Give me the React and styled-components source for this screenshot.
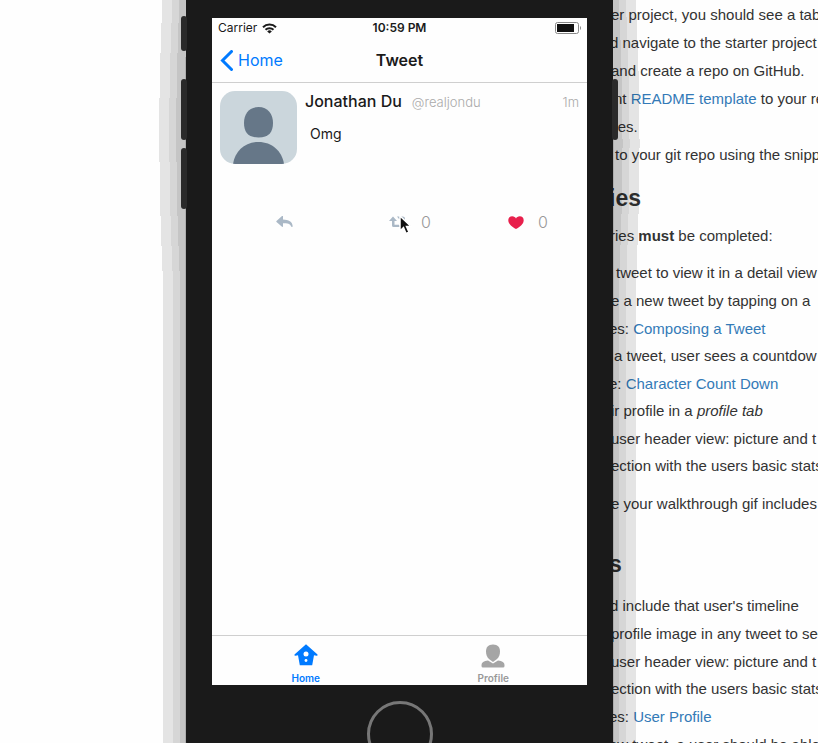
import React from "react";
import styled, { createGlobalStyle } from "styled-components";

const ui = `Inter, "Liberation Sans", sans-serif`;

const GlobalStyle = createGlobalStyle`
  * { box-sizing: border-box; }
  body { margin: 0; background: #fefefe; }
`;

const Desktop = styled.main`
  position: relative;
  height: 100vh;
  overflow: hidden;
`;

const Article = styled.article`
  padding: 1px 0 0 605px;
  color: #333;
  font: 15px/28px "Liberation Sans", Arial, sans-serif;
  white-space: nowrap;
`;

const List = styled.ul`
  margin: 0;
  padding: 0;
  list-style: none;
`;

const Item = styled.li`
  padding-left: ${(p) => p.$lead}px;
  line-height: ${(p) => (p.$sub ? 27 : 28)}px;
`;

const Heading = styled.h3`
  margin: ${(p) => p.$above}px 0 ${(p) => p.$below}px;
  padding-left: 4px;
  font-size: 23px;
  line-height: 28px;
`;

const Paragraph = styled.p`
  margin: 10px 0 9px;
  padding-left: ${(p) => p.$lead}px;
`;

const Link = styled.a`
  color: #337ab7;
  text-decoration: none;
`;

const Device = styled.section`
  position: absolute;
  top: -90px;
  left: 186px;
  width: 427px;
`;

const Shadow = styled.svg`
  position: absolute;
  top: 0;
  left: -30px;
  pointer-events: none;
`;

const Body = styled.div`
  position: relative;
  height: 890px;
  padding: 108px 26px 0;
  border-radius: 60px;
  background: #1a1a1a;
`;

const SideKey = styled.span`
  position: absolute;
  top: ${(p) => p.$top}px;
  ${(p) => p.$side}: -5px;
  width: 6px;
  height: ${(p) => p.$length}px;
  border-radius: 3px;
  background: #2a2a2a;
`;

const Screen = styled.div`
  display: flex;
  flex-direction: column;
  height: 667px;
  background: #fefefe;
  color: #1a1a1a;
  font-family: ${ui};
`;

const PlainButton = styled.button`
  padding: 0;
  border: 0;
  background: none;
  font-family: inherit;
  cursor: pointer;
`;

const StatusBar = styled.div`
  display: grid;
  grid-template-columns: 1fr auto 1fr;
  align-items: center;
  height: 20px;
  padding: 0 6px;
  font-size: 12px;
  line-height: 20px;
`;

const Carrier = styled.span`
  display: flex;
  align-items: center;
  gap: 5px;
`;

const Clock = styled.time`
  font-weight: 600;
`;

const Battery = styled.svg`
  justify-self: end;
`;

const NavBar = styled.header`
  display: grid;
  grid-template-columns: 1fr auto 1fr;
  align-items: center;
  height: 45px;
  padding: 0 8px;
  border-bottom: 1px solid #cfcfcf;
`;

const BackButton = styled(PlainButton)`
  display: flex;
  align-items: center;
  gap: 5px;
  color: #007aff;
  font-size: 16px;
`;

const Title = styled.h1`
  margin: 0;
  font-size: 16px;
  font-weight: 600;
`;

const Tweet = styled.article`
  display: grid;
  grid-template-columns: 77px 1fr;
  gap: 8px;
  padding: 8px;
`;

const Byline = styled.div`
  display: flex;
  align-items: baseline;
  gap: 10px;
  color: #aaa;
  font-size: 13px;
  font-weight: 300;
  line-height: 20px;
`;

const Author = styled.strong`
  color: #1a1a1a;
  font-size: 16px;
  font-weight: 500;
`;

const Age = styled.time`
  margin-left: auto;
`;

const Message = styled.p`
  margin: 12px 5px;
  font-size: 14px;
  line-height: 20px;
`;

const Actions = styled.div`
  display: grid;
  grid-template-columns: 113px 119px 1fr;
  margin-top: 39px;
  padding-left: 64px;
`;

const Action = styled(PlainButton)`
  display: flex;
  align-items: center;
  gap: 14px;
  height: 22px;
  color: #999;
  font-size: 16px;
  font-weight: 300;
`;

const TabBar = styled.nav`
  display: grid;
  grid-template-columns: 1fr 1fr;
  height: 50px;
  margin-top: auto;
  border-top: 1px solid #cfcfcf;
`;

const Tab = styled(PlainButton)`
  display: flex;
  flex-direction: column;
  align-items: center;
  justify-content: flex-end;
  gap: 3px;
  color: ${(p) => (p.$active ? "#007aff" : "#999")};
  font-size: 10px;
  font-weight: 600;
  line-height: 14px;
`;

const HomeKey = styled(PlainButton)`
  display: block;
  width: 66px;
  height: 66px;
  margin: 16px auto 0;
  border: 3px solid #777;
  border-radius: 50%;
`;

const Pointer = styled.svg`
  position: absolute;
  top: 215px;
  left: 398px;
`;

const band = (spread, bulge) => {
  const left = 30 - spread;
  const right = 457 + spread;
  return `M${left} 890V370Q${left - 2 * bulge} 220 ${left + 1} 60H${right - 2}Q${right + 2 * bulge} 220 ${right} 370V890z`;
};

const DeviceShadow = () => (
  <Shadow width="487" height="890" viewBox="0 0 487 890" overflow="visible" shapeRendering="crispEdges">
    <path d={band(23, 4)} fillOpacity=".1" />
    <path d={band(13, 4)} fillOpacity=".06" />
    <path d={band(6, 4)} fillOpacity=".08" />
    <path d={band(1, 0)} fillOpacity=".12" />
  </Shadow>
);

const WifiIcon = () => (
  <svg width="15" height="11" viewBox="0 0 15 11" fill="none" stroke="#1a1a1a" strokeWidth="2">
    <path d="M1 4.2a9.2 9.2 0 0 1 13 0M3.500 6.800a5.700 5.700 0 0 1 8 0" />
    <path d="M7.500 10.600 5.200 8.400a3.300 3.300 0 0 1 4.600 0z" fill="#1a1a1a" stroke="none" />
  </svg>
);

const BatteryIcon = () => (
  <Battery width="26" height="12" viewBox="0 0 26 12">
    <rect x=".5" y=".5" width="23" height="11" rx="2" fill="none" stroke="#888" />
    <rect x="2" y="2" width="17" height="8" fill="#111" />
    <path d="M25 4v4q1-.5 1-2t-1-2z" fill="#888" />
  </Battery>
);

const Avatar = () => (
  <svg width="77" height="73" viewBox="0 0 77 73" role="img" aria-label="Jonathan Du">
    <defs>
      <clipPath id="avatar"><rect width="77" height="73" rx="15" /></clipPath>
    </defs>
    <g clipPath="url(#avatar)">
      <rect width="77" height="73" fill="#cbd6dc" />
      <path d="M38.500 16C48 16 53 23 53 32C53 41 49 46.500 38.500 46.500S24 41 24 32C24 23 29 16 38.500 16z" fill="#667788" />
      <path d="M13 73C15 60 25 51 38.500 51S62 60 64 73z" fill="#667788" />
    </g>
  </svg>
);

const ReplyIcon = () => (
  <svg width="17" height="12" viewBox="0 0 17 12" fill="#aab8c6">
    <path d="M7 .3v3.100C12.500 3.500 16.500 5.500 16.700 10.200Q16.700 11 16 11T15 10.200C14.300 7.800 11.500 7.200 7 7.200V10.300Q6.800 11.200 6 10.700L.5 6Q0 5.500.5 5L6 0Q6.800-.4 7 .3z" />
  </svg>
);

const RetweetIcon = () => (
  <svg width="18" height="12" viewBox="0 0 18 12" fill="#aab8c6">
    <path d="M4 .5 8 5H5.500V8.700H10L12 11H4.500Q3 11 3 9.500V5H0zM8 .5H13.500Q16 .5 16 2.500V7H18L14 11.500 10.500 7H13V3H10z" />
  </svg>
);

const HeartIcon = () => (
  <svg width="16" height="13" viewBox="0 0 16 13" fill="#e8204c">
    <path d="M8 13C4 11 .3 8 .3 4.300C.3 1.700 2 .3 4.200.3 6 .3 7.400 1.300 8 2.500 8.600 1.300 10 .3 11.800.3 14 .3 15.700 1.700 15.700 4.300 15.700 8 12 11 8 13z" />
  </svg>
);

const HouseIcon = () => (
  <svg width="24" height="24" viewBox="0 0 24 24">
    <path d="M12 .3 23.500 10.500Q24 11.800 22.500 11.700L20 11.200 18.200 21.300H5.800L4 11.200 1.500 11.700Q0 11.800.5 10.500z" fill="#007aff" />
    <circle cx="12" cy="10" r="2.500" fill="#fff" />
    <circle cx="12" cy="16.500" r="1.400" fill="#fff" />
  </svg>
);

const PersonIcon = () => (
  <svg width="24" height="24" viewBox="0 0 24 24" fill="#a5a5a5">
    <path d="M12 .5C17 .5 19 3.500 19 7.500 19 10.500 18 13 16 15L12 18 8 15C6 13 5 10.500 5 7.500 5 3.500 7 .5 12 .5z" />
    <path d="M7 16.500 12 19.500 17 16.500Q23.500 17.200 23.500 21V22Q23.500 23.500 22 23.500H2Q.5 23.500.5 22V21Q.5 17.200 7 16.500z" />
  </svg>
);

export default function App() {
  return (
    <Desktop>
      <GlobalStyle />
      <Article>
        <List>
          <Item $lead={6}>er project, you should see a tab</Item>
          <Item $lead={5}>d navigate to the starter project</Item>
          <Item $lead={6}>and create a repo on GitHub.</Item>
          <Item $lead={9}>nt <Link href="#readme">README template</Link> to your re</Item>
          <Item $lead={6}>iles.</Item>
          <Item $lead={10}>to your git repo using the snipp</Item>
        </List>
        <Heading $above={15} $below={10}>ies</Heading>
        <Paragraph $lead={5}>ries <b>must</b> be completed:</Paragraph>
        <List>
          <Item $lead={11}>tweet to view it in a detail view</Item>
          <Item $lead={6}>e a new tweet by tapping on a</Item>
          <Item $sub $lead={4}>es: <Link href="#composing">Composing a Tweet</Link></Item>
          <Item $lead={9}>a tweet, user sees a countdow</Item>
          <Item $sub $lead={4}>e: <Link href="#countdown">Character Count Down</Link></Item>
          <Item $lead={6}>ir profile in a <i>profile tab</i></Item>
          <Item $sub $lead={6}>user header view: picture and t</Item>
          <Item $lead={6}>ection with the users basic stats</Item>
        </List>
        <Paragraph $lead={6}>e your walkthrough gif includes</Paragraph>
        <Heading $above={32} $below={14}>s</Heading>
        <List>
          <Item $lead={5}>d include that user's timeline</Item>
          <Item $lead={6}>profile image in any tweet to see</Item>
          <Item $sub $lead={6}>user header view: picture and t</Item>
          <Item $lead={6}>ection with the users basic stats</Item>
          <Item $lead={4}>es: <Link href="#profile">User Profile</Link></Item>
          <Item $lead={4}>ew tweet, a user should be able</Item>
        </List>
      </Article>

      <Device aria-label="Phone simulator">
        <DeviceShadow />
        <Body>
          <SideKey $side="left" $top={106} $length={35} />
          <SideKey $side="left" $top={169} $length={61} />
          <SideKey $side="left" $top={238} $length={61} />
          <SideKey $side="right" $top={169} $length={61} />
          <Screen>
            <StatusBar>
              <Carrier>Carrier <WifiIcon /></Carrier>
              <Clock>10:59 PM</Clock>
              <BatteryIcon />
            </StatusBar>
            <NavBar>
              <BackButton>
                <svg width="13" height="21" viewBox="0 0 13 21" fill="none" stroke="#007aff" strokeWidth="3">
                  <path d="M11.500 1.500 2.500 10.500 11.500 19.500" strokeLinecap="round" />
                </svg>
                Home
              </BackButton>
              <Title>Tweet</Title>
            </NavBar>
            <Tweet>
              <Avatar />
              <div>
                <Byline>
                  <Author>Jonathan Du</Author>
                  <span>@realjondu</span>
                  <Age>1m</Age>
                </Byline>
                <Message>Omg</Message>
              </div>
            </Tweet>
            <Actions>
              <Action aria-label="Reply"><ReplyIcon /></Action>
              <Action aria-label="Retweet"><RetweetIcon />0</Action>
              <Action aria-label="Like"><HeartIcon />0</Action>
            </Actions>
            <TabBar>
              <Tab $active><HouseIcon />Home</Tab>
              <Tab><PersonIcon />Profile</Tab>
            </TabBar>
          </Screen>
          <HomeKey aria-label="Home button" />
        </Body>
      </Device>
      <Pointer width="14" height="20" viewBox="0 0 14 20">
        <path d="M2 1V16L5.500 12.500 8 18.500 11 17.200 8.500 11.500H13z" fill="#111" stroke="#fff" strokeWidth="1.500" />
      </Pointer>
    </Desktop>
  );
}
